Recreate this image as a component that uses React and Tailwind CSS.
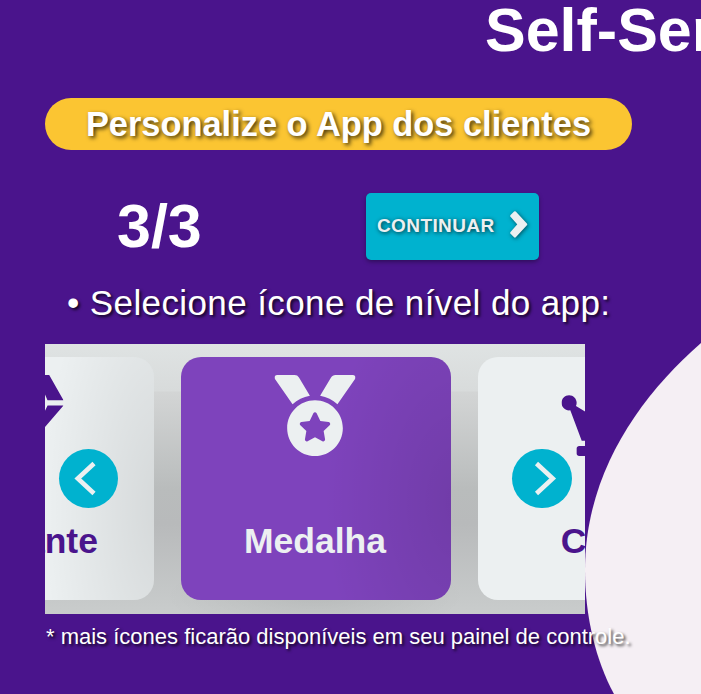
import { FaCrown, FaGem, FaMedal } from 'react-icons/fa';

const levels = [
  { name: 'Diamante', Icon: FaGem, size: 'w-[91px]', card: 'text-[#4a148c] bg-[#ecf0f1]', shade: 'bg-[radial-gradient(ellipse_45%_120%_at_104%_62%,rgba(0,0,0,0.1),transparent)]' },
  { name: 'Medalha', Icon: FaMedal, size: 'w-[81px]', card: 'text-[#ecf0f1] bg-[#7e43bc]', shade: 'bg-[radial-gradient(ellipse_50%_95%_at_103%_60%,rgba(0,0,0,0.11),transparent)]' },
  { name: 'Coroa', Icon: FaCrown, size: 'w-[101px]', card: 'text-[#4a148c] bg-[#ecf0f1]', shade: '' },
];

function LevelCard({ name, Icon, size, card, shade }) {
  return (
    <div className={`h-[243px] w-[270px] shrink-0 overflow-hidden rounded-[20px] ${card}`}>
      <div className={`h-full w-full ${shade}`}>
        <div className="flex -translate-x-[0.5px] flex-col items-center pt-[18px]">
          <Icon preserveAspectRatio="none" className={`h-[81px] ${size}`} />
          <span className="mt-[64px] text-[35.5px] leading-[42px] font-bold">{name}</span>
        </div>
      </div>
    </div>
  );
}

function Chevron() {
  return (
    <svg viewBox="0 0 21 31" fill="currentColor" stroke="currentColor" strokeWidth="2.4" strokeLinejoin="round" className="-mt-1 ml-[13px] h-[31px] w-[21px] shrink-0 drop-shadow-[1px_1px_2px_rgba(0,0,0,0.55)]">
      <polygon points="3.4,6.9 6.9,3.4 18,15.4 6.9,27.4 3.4,23.9 10.9,15.4" />
    </svg>
  );
}

function Arrow({ points, className }) {
  return (
    <button className={`absolute top-[105px] h-[59px] rounded-full bg-[#00b2cf] ${className}`}>
      <svg viewBox="0 0 59 59" className="h-full w-full" fill="none" stroke="#ecf0f1" strokeWidth="4.6">
        <polyline points={points} />
      </svg>
    </button>
  );
}

export default function App() {
  return (
    <main className="relative isolate h-[694px] w-[701px] overflow-hidden bg-[#4a148c] px-[45px] font-['Liberation_Sans',Arial,sans-serif] text-white">
      {/* Pale decorative shape behind the content */}
      <svg viewBox="0 0 701 694" className="absolute inset-0 -z-10 h-full w-full">
        <path d="M701 343C638 398 585 475 585 570C585 617 596 661 614 694H701Z" fill="#f5eff4" />
      </svg>

      <h1 className="ml-[440px] h-[98px] text-[61px] leading-[60px] font-bold whitespace-nowrap">Self-Service</h1>

      <h2 className="h-[52px] w-[587px] rounded-full bg-[#fbc532] text-center text-[34.4px] leading-[52px] font-bold whitespace-nowrap [text-shadow:2px_2px_4px_rgba(0,0,0,0.75)]">
        Personalize o App dos clientes
      </h2>

      <div className="mt-[43px] flex h-[67px]">
        <span className="w-[321px] pl-[72px] text-[61px] leading-[67px] font-bold">3/3</span>
        <button className="flex h-[67px] w-[173px] items-center rounded-[5px] bg-[#00b2cf] pl-[11px] text-[19px] font-bold tracking-[0.4px] text-[#ecf0f1] shadow-[0_2px_4px_rgba(0,0,0,0.35)] [text-shadow:1px_1px_4px_rgba(0,0,0,0.75)]">
          CONTINUAR
          <Chevron />
        </button>
      </div>

      <p className="mt-[22px] ml-[22px] h-[62px] text-[35px] leading-[41px] tracking-[0.4px] whitespace-nowrap [text-shadow:2px_2px_3px_rgba(0,0,0,0.75)]">
        • Selecione ícone de nível do app:
      </p>

      <section className="relative h-[270px] w-[540px] overflow-hidden bg-[radial-gradient(ellipse_150px_40px_at_270px_252px,rgba(0,0,0,0.07),transparent),linear-gradient(#dfe3e3_0,#d8dbdb_47px,#d3d5d5_48px,#b9bcbc_145px,#b8babb_180px,#c9cccc_270px)]">
        <div className="-ml-[161.5px] flex gap-[27px] pt-[13px]">
          {levels.map((level) => <LevelCard key={level.name} {...level} />)}
        </div>
        <Arrow className="left-[14px] w-[59px]" points="35,14.5 18.8,29.5 35,44.5" />
        <Arrow className="left-[467px] w-[60px]" points="24,14.5 40.2,29.5 24,44.5" />
      </section>

      <p className="mt-[10px] ml-px text-[22px] leading-[26px] whitespace-nowrap [text-shadow:2px_2px_3px_rgba(0,0,0,0.75)]">
        * mais ícones ficarão disponíveis em seu painel de controle.
      </p>
    </main>
  );
}
